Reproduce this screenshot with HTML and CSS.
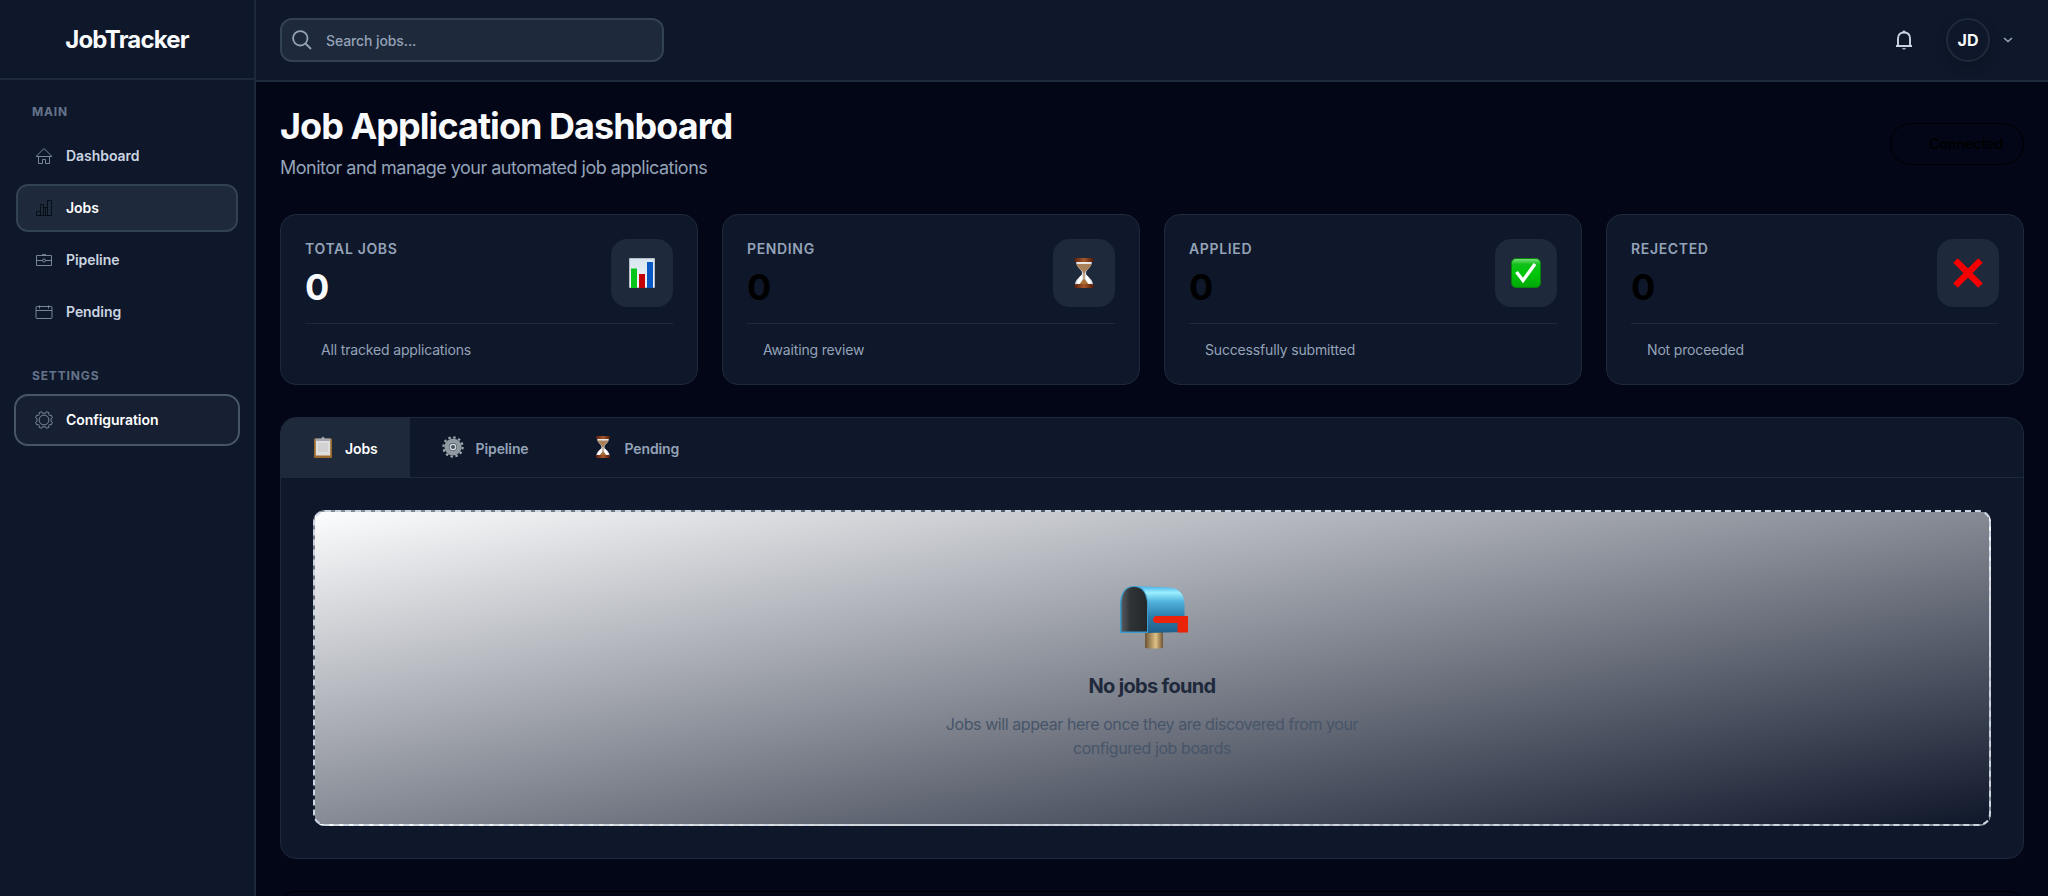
FILE: index.html
```html
<!DOCTYPE html>
<html lang="en">
<head>
<meta charset="utf-8">
<title>JobTracker</title>
<link rel="stylesheet" href="styles.css">
</head>
<body>
<svg class="defs" width="0" height="0">
  <defs>
    <linearGradient id="wood" x1="0" x2="1"><stop offset="0" stop-color="#5c200b"/><stop offset=".5" stop-color="#a5572b"/><stop offset="1" stop-color="#521b08"/></linearGradient>
    <linearGradient id="paper" x1="0" x2="0" y1="0" y2="1"><stop offset="0" stop-color="#d7e4f0"/><stop offset="1" stop-color="#f3f6fa"/></linearGradient>
    <linearGradient id="green" x1="0" x2="0" y1="0" y2="1"><stop offset="0" stop-color="#7fe07f"/><stop offset=".2" stop-color="#12bf1a"/><stop offset=".5" stop-color="#00c70a"/><stop offset="1" stop-color="#00a808"/></linearGradient>
    <linearGradient id="blue" x1="0" x2="0" y1="0" y2="1"><stop offset="0" stop-color="#45aee6"/><stop offset=".14" stop-color="#9bf0ff"/><stop offset=".34" stop-color="#4fb0db"/><stop offset=".65" stop-color="#2c7dac"/><stop offset="1" stop-color="#205e8b"/></linearGradient>
    <linearGradient id="dark" x1="0" x2="1"><stop offset="0" stop-color="#55595d"/><stop offset=".35" stop-color="#303336"/><stop offset="1" stop-color="#25282b"/></linearGradient>
    <linearGradient id="post" x1="0" x2="1"><stop offset="0" stop-color="#6b5334"/><stop offset=".6" stop-color="#dfc084"/><stop offset="1" stop-color="#6f5636"/></linearGradient>
    <symbol id="hourglass" viewBox="0 0 20 30">
      <path d="M2 3C2 10 8 11 8 15C8 19 1 20 1 27H19C19 20 12 19 12 15C12 11 18 10 18 3Z" fill="#d6dce2"/>
      <path d="M2.500 6C4 11 9 12 9 15H11C11 12 16 11 17.500 6Z" fill="#a98058"/>
      <path d="M9.500 15H10.500V21L15 27H5L9.500 21Z" fill="#aa7137"/>
      <path d="M3 25Q4 19 8 17L8.500 21L5 26ZM17 25Q16 19 12 17L11.500 21L15 26Z" fill="#fff"/>
      <path d="M3 5H17" stroke="#f3efe8" stroke-width="1.200"/>
      <rect x=".5" y="0" width="19" height="4" rx="1.500" fill="url(#wood)"/>
      <rect x=".5" y="26" width="19" height="4" rx="1.500" fill="url(#wood)"/>
    </symbol>
  </defs>
</svg>
<div class="app">
  <aside class="sidebar">
    <div class="brand">JobTracker</div>
    <nav class="nav">
      <h2 class="nav-heading">MAIN</h2>
      <a class="nav-item"><svg class="nav-icon" viewBox="0 0 18 18"><path d="M1 9.500H17M1.500 9L9 1.500L16.500 9M3.500 9.500V16.500H7.500V12.500H10.500V16.500H14.500V9.500"/></svg><span>Dashboard</span></a>
      <a class="nav-item active"><svg class="nav-icon black" viewBox="0 0 18 18"><path d="M1.500 16.500V12.500H5.500V16.500ZM5.500 16.500V5.500H8.500V16.500ZM8.500 8.500H12.500M10.500 8.500V16.500M12.500 16.500V1.500H16.500V16.500ZM1.500 16.500H16.500"/></svg><span>Jobs</span></a>
      <a class="nav-item"><svg class="nav-icon" viewBox="0 0 18 18"><path d="M1.500 4.500H16.500V14.500H1.500ZM7.500 4.500V3.500H10.500V4.500M1.500 9.500H7.500M10.500 9.500H16.500"/><circle cx="9" cy="9.500" r="1.500"/></svg><span>Pipeline</span></a>
      <a class="nav-item"><svg class="nav-icon" viewBox="0 0 18 18"><rect x="1" y="3.500" width="16" height="12" rx="1"/><path d="M1 7.500H17M4.500 2.500V5.500M13.500 2.500V5.500"/></svg><span>Pending</span></a>
      <h2 class="nav-heading settings">SETTINGS</h2>
      <a class="nav-item focus"><svg class="nav-icon" viewBox="0 0 18 18"><circle cx="9" cy="9" r="4.900"/><path d="M7.300 2.200L6.500 .7L4 1.800L4.300 3.700L3.500 4.500L1.700 4.200L.6 6.700L2 7.700V10.300L.6 11.300L1.700 13.800L3.500 13.500L4.300 14.300L4 16.200L6.500 17.300L7.300 15.800H10.700L11.500 17.300L14 16.200L13.700 14.300L14.500 13.500L16.300 13.800L17.400 11.300L16 10.300V7.700L17.400 6.700L16.300 4.200L14.500 4.500L13.700 3.700L14 1.800L11.500 .7L10.700 2.200Z"/></svg><span>Configuration</span></a>
    </nav>
  </aside>
  <div class="main">
    <header class="topbar">
      <div class="search"><svg class="search-icon" viewBox="0 0 20 20"><circle cx="8.300" cy="8.300" r="7.200"/><path d="M13.500 13.500L19 19"/></svg><span>Search jobs...</span></div>
      <div class="account">
        <svg class="bell" viewBox="0 0 20 22"><path d="M4 17V9.500C4 5.500 6.500 3.500 10 3.500S16 5.500 16 9.500V17M2 17H18" fill="none" stroke="currentColor" stroke-width="1.900"/><path d="M8.500 3.500V2.300Q10 .5 11.500 2.300V3.500ZM8 19.200H12Q11.500 20.500 10 20.500T8 19.200Z" fill="currentColor"/></svg>
        <div class="avatar">JD</div>
        <svg class="chevron" viewBox="0 0 10 6"><path d="M1 1L5 4.500L9 1"/></svg>
      </div>
    </header>
    <main class="content">
      <div class="page-head">
        <div><h1 class="title">Job Application Dashboard</h1><p class="subtitle">Monitor and manage your automated job applications</p></div>
        <div class="status">Connected</div>
      </div>
      <section class="stats">
        <article class="card"><div class="card-top"><div><div class="label">TOTAL JOBS</div><div class="value light">0</div></div><div class="tile"><svg width="26" height="30" viewBox="0 0 26 30"><path d="M.5 .5H25.500V29.500H.5Z" fill="url(#paper)" stroke="#b5bdc5"/><path d="M2 10.500H8V30H2Z" fill="#05c51b"/><path d="M10 16H16V30H10Z" fill="#c40008"/><path d="M18 4H24V30H18Z" fill="#0757c5"/></svg></div></div><div class="note">All tracked applications</div></article>
        <article class="card"><div class="card-top"><div><div class="label">PENDING</div><div class="value">0</div></div><div class="tile"><svg width="20" height="30"><use href="#hourglass"/></svg></div></div><div class="note">Awaiting review</div></article>
        <article class="card"><div class="card-top"><div><div class="label">APPLIED</div><div class="value">0</div></div><div class="tile"><svg width="30" height="30" viewBox="0 0 30 30"><rect x=".5" y=".5" width="29" height="29" rx="4.500" fill="url(#green)" stroke="#08800c"/><path d="M5.500 14L12 22.500L24 6" fill="none" stroke="#fff" stroke-width="3.300"/></svg></div></div><div class="note">Successfully submitted</div></article>
        <article class="card"><div class="card-top"><div><div class="label">REJECTED</div><div class="value">0</div></div><div class="tile"><svg width="30" height="30" viewBox="0 0 30 30"><path d="M2.500 2.500L27.500 27.500M27.500 2.500L2.500 27.500" stroke="#f50000" stroke-width="6.500"/></svg></div></div><div class="note">Not proceeded</div></article>
      </section>
      <section class="panel">
        <div class="tabs">
          <div class="tab selected"><svg width="20" height="22" viewBox="0 0 20 22"><rect x="1" y="2.500" width="18" height="19.500" rx="1" fill="#9a6a2d"/><path d="M2.800 4.500H17.200V19.500H2.800Z" fill="#dedede"/><path d="M5 7H15V16H5Z" fill="#d2d2d2"/><path d="M2.500 2.500H8L10 .5L12 2.500H17.500V5H2.500Z" fill="#a5a8b0"/></svg>Jobs</div>
          <div class="tab"><svg width="22" height="22" viewBox="0 0 22 22"><circle cx="11" cy="11" r="9.600" fill="none" stroke="#a1a9b0" stroke-width="2.200" stroke-dasharray="2.400 2.626"/><circle cx="11" cy="11" r="6.300" fill="#4b555e" stroke="#9098a0" stroke-width="4.600"/><circle cx="11" cy="11" r="2.700" fill="#47535e" stroke="#d4dce2" stroke-width="1.300"/></svg>Pipeline</div>
          <div class="tab"><svg width="20" height="22"><use href="#hourglass"/></svg>Pending</div>
        </div>
        <div class="panel-body">
          <div class="empty">
            <svg class="mailbox" width="68" height="63" viewBox="0 0 68 63"><path d="M25 45H43V62Q34 63 25 62Z" fill="url(#post)"/><path d="M14 0L50 1.500Q64 3 64.500 18V46L28 47L14 20Z" fill="url(#blue)"/><path d="M0 47V16Q2 0 14 0T28 16V47Z" fill="#3b9bcb"/><path d="M1.500 45.500V16Q3 1 14 1T27 16V45.500Z" fill="url(#dark)"/><path d="M36 30H68V46.500H57.500V37H36Q33 36 33 33.500T36 30Z" fill="#eb2309"/></svg>
            <h3 class="empty-title">No jobs found</h3>
            <p class="empty-text">Jobs will appear here once they are discovered from your configured job boards</p>
          </div>
        </div>
      </section>
      <section class="next-panel"></section>
    </main>
  </div>
</div>
</body>
</html>
```
FILE: styles.css
```css
* { box-sizing: border-box; }
body { margin: 0; background: #020617; font-family: Inter, "Liberation Sans", sans-serif; color: #f8fafc; }
h1, h2, h3, p { margin: 0; }
.defs { position: absolute; }
.app { display: flex; height: 896px; overflow: hidden; }
.sidebar { width: 256px; flex: none; background: #0f172a; border-right: 2px solid #1e293b; }
.brand { height: 80px; display: flex; align-items: center; justify-content: center; border-bottom: 2px solid #1e293b; font-size: 24px; font-weight: 700; letter-spacing: -.8px; }
.nav { padding: 24px 16px; display: flex; flex-direction: column; gap: 4px; }
.nav-heading { height: 16px; padding-left: 16px; margin-bottom: 8px; font-size: 12px; line-height: 16px; font-weight: 700; letter-spacing: .85px; color: #64748b; }
.nav-heading.settings { margin-top: 28px; }
.nav-item { display: flex; align-items: center; gap: 13px; height: 48px; padding-left: 17px; border: 2px solid transparent; border-radius: 12px; font-size: 14px; font-weight: 600; color: #cbd5e1; }
.nav-item span { padding-bottom: 1px; letter-spacing: -.05px; }
.nav-item.active { background: #1e293b; border-color: #334155; color: #fff; }
.nav-item.focus { height: 52px; margin: -2px; padding-left: 19px; border-radius: 14px; background: #172033; border-color: #475569; color: #fff; }
.nav-icon { width: 18px; height: 18px; fill: none; stroke: #8492a6; stroke-width: .9; }
.nav-icon.black { stroke: #050b14; }
.main { flex: 1; min-width: 0; }
.topbar { height: 82px; padding: 0 35px 0 24px; display: flex; align-items: center; justify-content: space-between; background: #0f172a; border-bottom: 2px solid #1e293b; }
.search { width: 384px; height: 44px; display: flex; align-items: center; gap: 14px; padding-left: 10px; border: 2px solid #334155; border-radius: 12px; background: #1e293b; color: #94a3b8; font-size: 14px; font-weight: 500; letter-spacing: -.1px; }
.search-icon { width: 20px; height: 20px; fill: none; stroke: #94a3b8; stroke-width: 1.800; }
.account { display: flex; align-items: center; }
.bell { width: 20px; height: 22px; color: #cbd5e1; margin-right: 32px; }
.avatar { width: 44px; height: 44px; display: flex; align-items: center; justify-content: center; border: 2px solid #1e293b; border-radius: 50%; font-size: 16px; font-weight: 700; box-shadow: 0 5px 8px #0d1425; }
.chevron { width: 10px; height: 6px; margin-left: 13px; fill: none; stroke: #94a3b8; stroke-width: 1.600; }
.content { padding: 24px; }
.page-head { height: 76px; display: flex; justify-content: space-between; align-items: center; }
.title { font-size: 36px; line-height: 40px; font-weight: 700; letter-spacing: -.97px; }
.subtitle { margin-top: 8px; font-size: 18px; line-height: 28px; letter-spacing: -.51px; color: #94a3b8; }
.status { width: 134px; height: 42px; padding: 0 20px 2px 38px; display: flex; align-items: center; border: 1px solid #000; border-radius: 21px; color: #000; font-size: 14px; font-weight: 600; }
.stats { display: grid; grid-template-columns: repeat(4, 1fr); gap: 24px; margin-top: 32px; }
.card { height: 171px; padding: 24px; background: #0f172a; border: 1px solid #1e293b; border-radius: 16px; }
.card-top { display: flex; justify-content: space-between; height: 85px; border-bottom: 1px solid #1e293b; }
.label { font-size: 14px; line-height: 20px; font-weight: 600; letter-spacing: .65px; color: #94a3b8; }
.value { margin-top: 8px; font-size: 36px; line-height: 40px; font-weight: 700; color: #000; }
.value.light { color: #f8fafc; }
.tile { width: 62px; height: 68px; display: flex; align-items: center; justify-content: center; border-radius: 16px; background: #1e293b; }
.note { margin-top: 16px; padding-left: 16px; font-size: 14px; line-height: 20px; letter-spacing: -.16px; color: #94a3b8; }
.panel { height: 442px; margin-top: 32px; border: 1px solid #1e293b; border-radius: 16px; background: #0f172a; overflow: hidden; }
.tabs { height: 60px; display: flex; border-bottom: 1px solid #1e293b; }
.tab { display: flex; align-items: center; gap: 12px; padding: 2px 32px 0; font-size: 14px; font-weight: 600; letter-spacing: -.12px; color: #94a3b8; }
.tab svg { margin-top: -4px; }
.tab.selected { background: #1e293b; color: #fff; }
.panel-body { padding: 32px; }
.empty { height: 316px; display: flex; flex-direction: column; align-items: center; border: 2px dashed #cbd5e1; border-radius: 12px; background: linear-gradient(to bottom right, #fcfdfe, #0f172a); text-align: center; }
.mailbox { margin: 74px 0 0 4px; flex: none; }
.empty-title { margin-top: 23px; font-size: 20px; line-height: 28px; font-weight: 700; letter-spacing: -.68px; color: #1e293b; }
.empty-text { width: 448px; margin-top: 12px; font-size: 16px; line-height: 24px; letter-spacing: -.42px; color: #475569; padding: 0 10px; }
.next-panel { height: 100px; margin-top: 32px; border: 1px solid #000; border-radius: 16px; }
```
